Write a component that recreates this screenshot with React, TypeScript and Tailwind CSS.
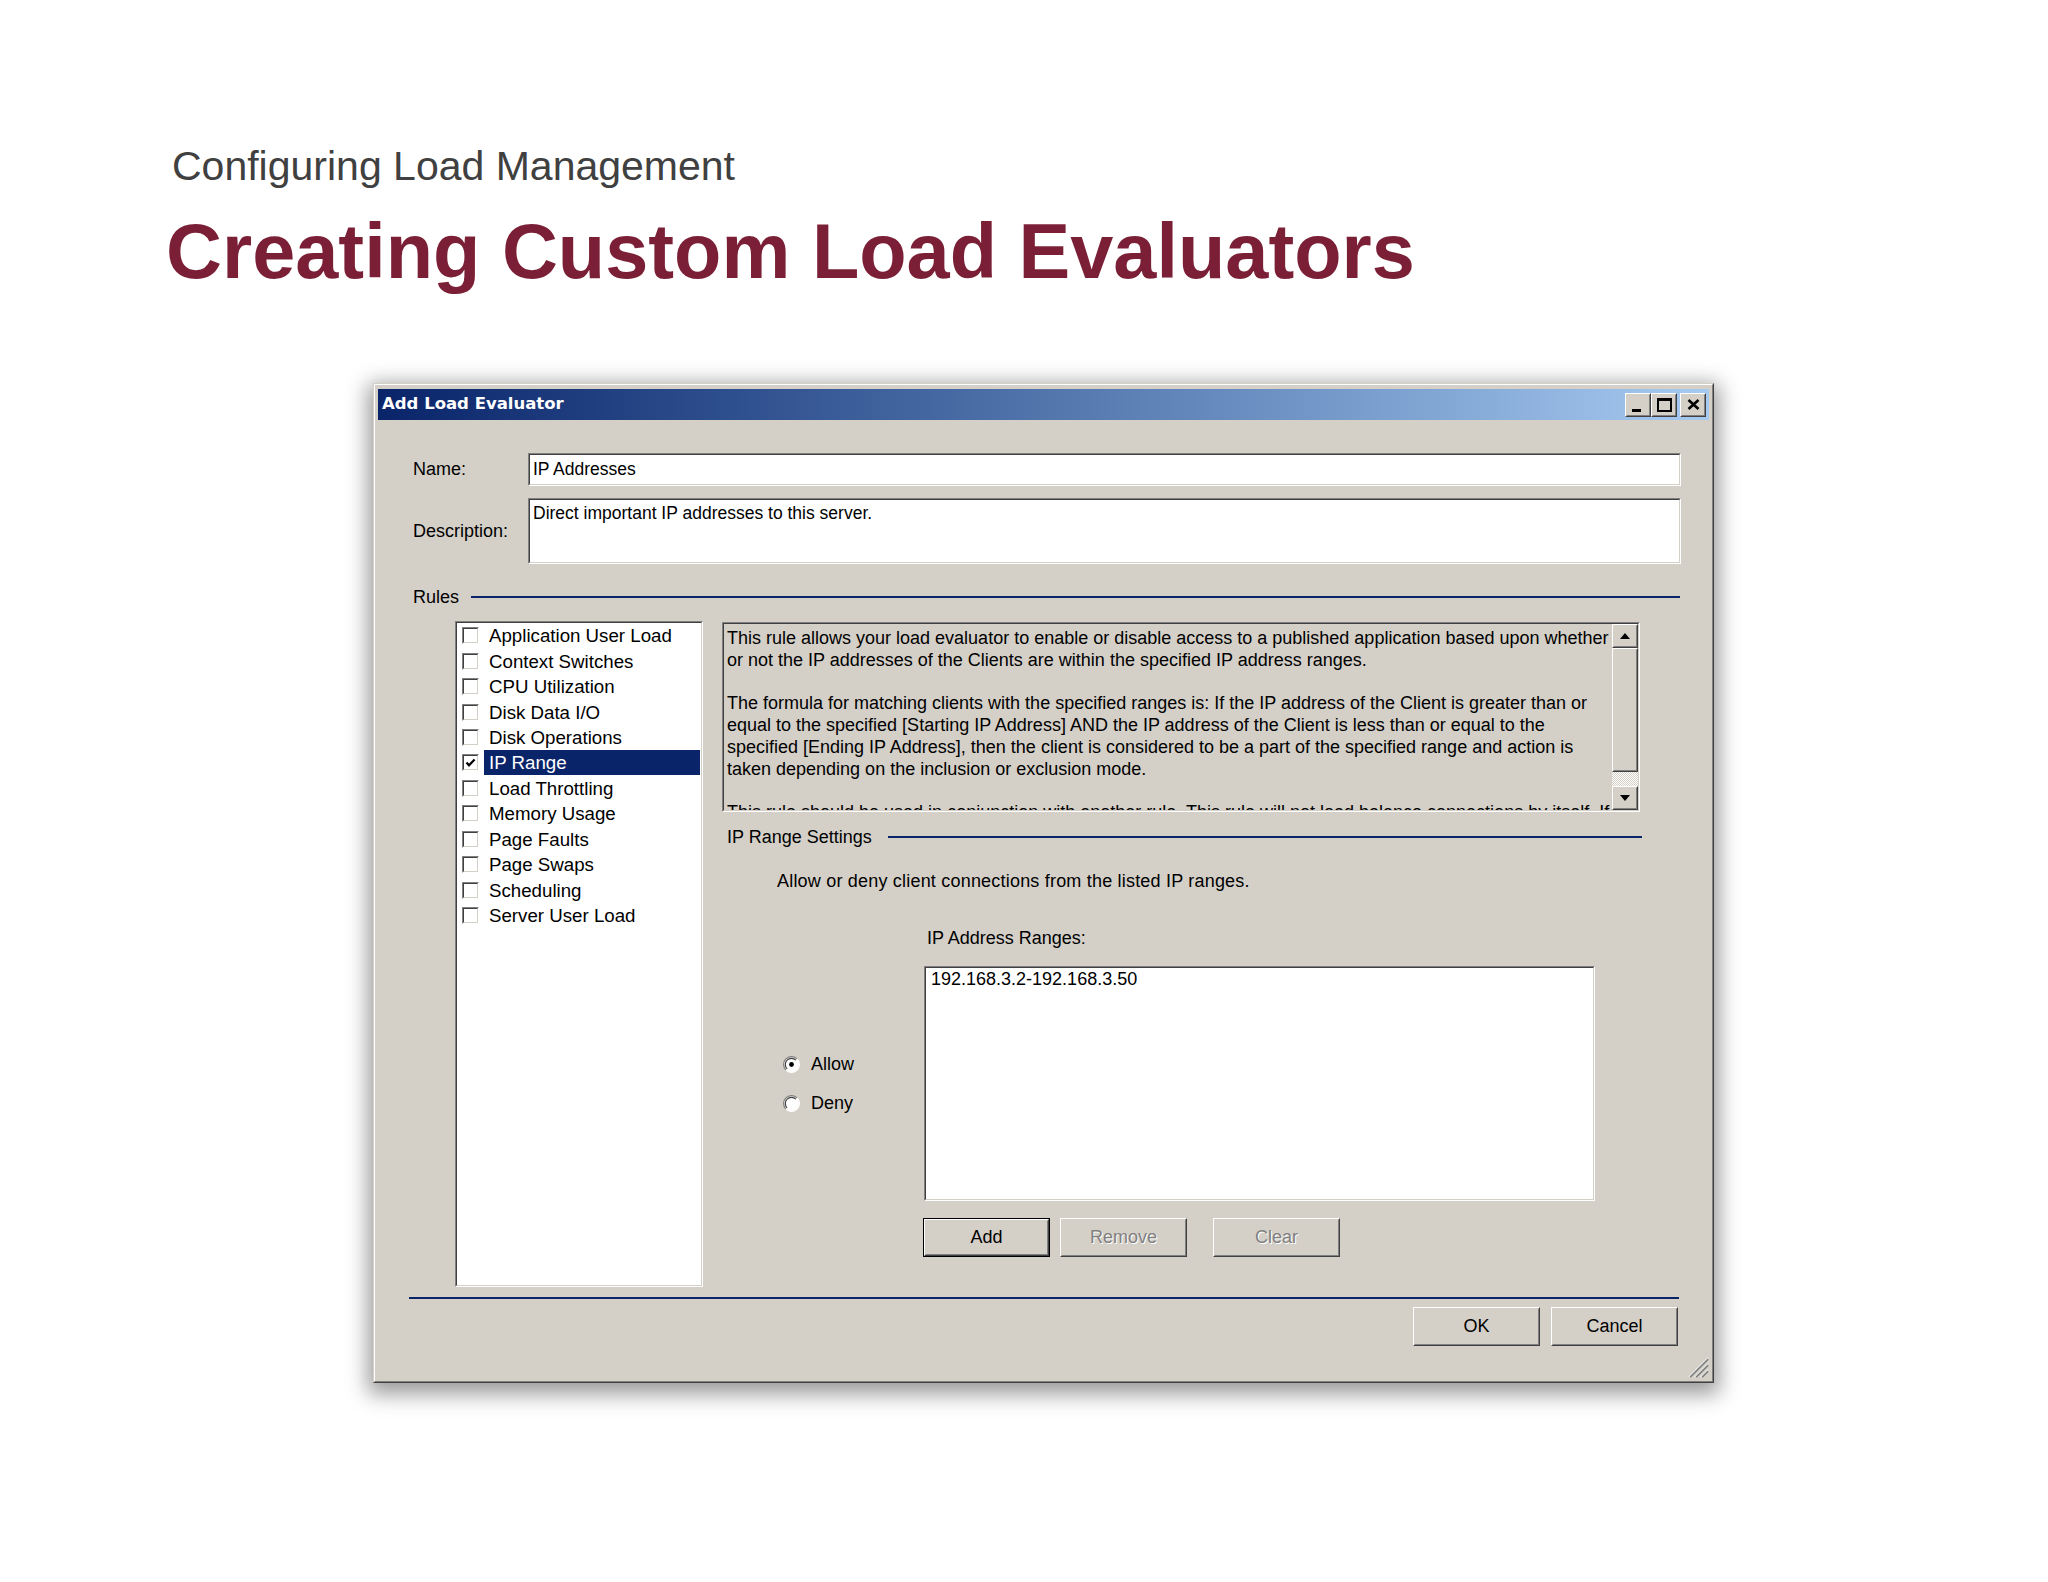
import React from "react";

const rules = [
  "Application User Load",
  "Context Switches",
  "CPU Utilization",
  "Disk Data I/O",
  "Disk Operations",
  "IP Range",
  "Load Throttling",
  "Memory Usage",
  "Page Faults",
  "Page Swaps",
  "Scheduling",
  "Server User Load",
];

const helpLines = [
  "This rule allows your load evaluator to enable or disable access to a published application based upon whether",
  "or not the IP addresses of the Clients are within the specified IP address ranges.",
  "",
  "The formula for matching clients with the specified ranges is:  If the IP address of the Client is greater than or",
  "equal to the specified [Starting IP Address] AND the IP address of the Client is less than or equal to the",
  "specified [Ending IP Address], then the client is considered to be a part of the specified range and action is",
  "taken depending on the inclusion or exclusion mode.",
  "",
  "This rule should be used in conjunction with another rule. This rule will not load balance connections by itself. If",
];

function Raised({
  className = "",
  inner = "flex items-center justify-center",
  children,
}: {
  className?: string;
  inner?: string;
  children?: React.ReactNode;
}) {
  return (
    <div className={"border border-t-white border-l-white border-b-[#404040] border-r-[#404040] bg-[#d4d0c8] " + className}>
      <div className={"w-full h-full border border-t-[#d4d0c8] border-l-[#d4d0c8] border-b-[#808080] border-r-[#808080] " + inner}>
        {children}
      </div>
    </div>
  );
}

function Sunken({
  className = "",
  inner = "bg-white",
  children,
}: {
  className?: string;
  inner?: string;
  children?: React.ReactNode;
}) {
  return (
    <div className={"border border-t-[#808080] border-l-[#808080] border-b-white border-r-white " + className}>
      <div className={"w-full h-full border border-t-[#404040] border-l-[#404040] border-b-[#d4d0c8] border-r-[#d4d0c8] " + inner}>
        {children}
      </div>
    </div>
  );
}

function CheckBox({ checked }: { checked?: boolean }) {
  return (
    <Sunken className="w-[17px] h-[17px] shrink-0" inner="bg-white flex items-center justify-center">
      {checked && (
        <svg width="11" height="11" viewBox="0 0 11 11">
          <path d="M1.5 5.5 L4 8.3 L9.6 2.4" stroke="#000" strokeWidth="2.2" fill="none" />
        </svg>
      )}
    </Sunken>
  );
}

function Radio({ checked }: { checked?: boolean }) {
  return (
    <svg width="17" height="17" viewBox="0 0 17 17" className="shrink-0">
      <circle cx="8.5" cy="8.5" r="7.5" fill="#fff" />
      <path d="M14.1 2.9 A7.5 7.5 0 0 0 2.9 14.1" stroke="#808080" strokeWidth="1.2" fill="none" />
      <path d="M12.9 4.1 A6.2 6.2 0 0 0 4.1 12.9" stroke="#404040" strokeWidth="1.2" fill="none" />
      <path d="M2.9 14.1 A7.5 7.5 0 0 0 14.1 2.9" stroke="#ffffff" strokeWidth="1.2" fill="none" />
      {checked && <circle cx="8.5" cy="8.5" r="2.4" fill="#000" />}
    </svg>
  );
}

function Button({
  label,
  disabled,
  isDefault,
  className = "",
}: {
  label: string;
  disabled?: boolean;
  isDefault?: boolean;
  className?: string;
}) {
  const text = disabled ? "text-[#808080] [text-shadow:1px_1px_0_#ffffff]" : "text-black";
  if (isDefault) {
    return (
      <div className={"w-[127px] h-[39px] border border-black " + className}>
        <Raised className="w-full h-full">
          <span className={text}>{label}</span>
        </Raised>
      </div>
    );
  }
  return (
    <Raised className={"w-[127px] h-[39px] " + className}>
      <span className={text}>{label}</span>
    </Raised>
  );
}

function ScrollBar() {
  return (
    <div className="w-[26px] flex flex-col shrink-0">
      <Raised className="h-[24px]">
        <svg width="10" height="6" viewBox="0 0 10 6">
          <polygon points="5,0 10,6 0,6" fill="#000" />
        </svg>
      </Raised>
      <Raised className="h-[124px]" />
      <div className="h-[14px] bg-[repeating-conic-gradient(#ffffff_0_25%,#d4d0c8_0_50%)] bg-[length:2px_2px]" />
      <Raised className="h-[24px]">
        <svg width="10" height="6" viewBox="0 0 10 6">
          <polygon points="0,0 10,0 5,6" fill="#000" />
        </svg>
      </Raised>
    </div>
  );
}

export default function App() {
  return (
    <div className="w-full min-h-[1582px] bg-white font-['Liberation_Sans',Arial,sans-serif]">
      <div className="pl-[166px] pt-[142px]">
        <div className="ml-[6px] text-[41px] leading-[48px] text-[#404040]">Configuring Load Management</div>
        <div className="mt-[22px] text-[77.5px] leading-[79px] font-bold text-[#7b1f36]">
          Creating Custom Load Evaluators
        </div>
      </div>

      {/* dialog window */}
      <div className="relative ml-[373px] mt-[92px] w-[1341px] h-[1000px] bg-[#d4d0c8] border border-t-[#d4d0c8] border-l-[#d4d0c8] border-b-[#404040] border-r-[#404040] shadow-[0_6px_20px_5px_rgba(0,0,0,0.4)]">
        <div className="h-full flex flex-col border border-t-white border-l-white border-b-[#808080] border-r-[#808080] px-[3px] pt-[4px]">
          <div className="h-[31px] shrink-0 flex items-center justify-between bg-linear-to-r from-[#0a246a] to-[#a6caf0] pl-[4px] pr-[3px]">
            <span className="font-['DejaVu_Sans',Verdana,sans-serif] font-bold text-[16.5px] text-white">
              Add Load Evaluator
            </span>
            <div className="flex items-center">
              <Raised className="w-[26px] h-[24px]" inner="flex items-end pl-[5px] pb-[3px]">
                <div className="w-[9px] h-[3px] bg-black" />
              </Raised>
              <Raised className="w-[26px] h-[24px]">
                <div className="w-[15px] h-[14px] border-2 border-t-[3px] border-black" />
              </Raised>
              <Raised className="ml-[3px] w-[26px] h-[24px]">
                <svg width="13" height="11" viewBox="0 0 13 11">
                  <path d="M1.5 1 L11.5 10 M11.5 1 L1.5 10" stroke="#000" strokeWidth="2.6" />
                </svg>
              </Raised>
            </div>
          </div>

          <div className="flex-1 flex flex-col pl-[35px] pr-[28px] pt-[33px] text-[18px] text-black">
            <div className="grid grid-cols-[115px_1fr] gap-y-[12px] items-center">
              <div>Name:</div>
              <Sunken className="h-[33px]">
                <div className="pl-[3px] leading-[29px] text-[17.5px]">IP Addresses</div>
              </Sunken>
              <div>Description:</div>
              <Sunken className="h-[66px]">
                <div className="pl-[3px] pt-[2px] leading-[22px] text-[17.5px]">
                  Direct important IP addresses to this server.
                </div>
              </Sunken>
            </div>

            <div className="mt-[22px] h-[22px] flex items-center">
              <span>Rules</span>
              <div className="ml-[12px] mr-[1px] flex-1 h-[2px] bg-[#0a246a]" />
            </div>

            <div className="mt-[13px] flex pl-[42px] gap-[19px]">
              <Sunken className="w-[248px] h-[666px] shrink-0">
                <div className="text-[18.7px]">
                  {rules.map((r) => {
                    const sel = r === "IP Range";
                    return (
                      <div key={r} className="h-[25.45px] flex items-center pl-[5px]">
                        <CheckBox checked={sel} />
                        <div
                          className={
                            "ml-[5px] mr-[1px] flex-1 h-[25px] leading-[25px] pl-[5px] whitespace-nowrap " +
                            (sel ? "bg-[#0a246a] text-white" : "")
                          }
                        >
                          {r}
                        </div>
                      </div>
                    );
                  })}
                </div>
              </Sunken>

              <div className="w-[920px] flex flex-col">
                <Sunken className="mt-[1px] w-[918px] h-[190px]" inner="bg-[#d4d0c8] flex">
                  <div className="flex-1 overflow-hidden pl-[3px] pt-[4px] leading-[21.8px] whitespace-nowrap">
                    {helpLines.map((l, i) => (
                      <div key={i} className="h-[21.8px]">
                        {l}
                      </div>
                    ))}
                  </div>
                  <ScrollBar />
                </Sunken>

                <div className="mt-[14px] h-[22px] flex items-center pl-[5px]">
                  <span>IP Range Settings</span>
                  <div className="ml-[16px] flex-1 h-[2px] bg-[#0a246a]" />
                </div>

                <div className="mt-[22px] pl-[55px] leading-[22px] tracking-[0.2px]">
                  Allow or deny client connections from the listed IP ranges.
                </div>

                <div className="mt-[35px] grid grid-cols-[202px_671px] gap-y-[17px]">
                  <div />
                  <div className="pl-[3px] leading-[22px]">IP Address Ranges:</div>

                  <div className="self-center flex flex-col gap-[17px] pl-[61px]">
                    <div className="flex items-center h-[22px] gap-[11px]">
                      <Radio checked />
                      <span>Allow</span>
                    </div>
                    <div className="flex items-center h-[22px] gap-[11px]">
                      <Radio />
                      <span>Deny</span>
                    </div>
                  </div>
                  <Sunken className="h-[235px]">
                    <div className="pl-[5px] leading-[22px]">192.168.3.2-192.168.3.50</div>
                  </Sunken>

                  <div />
                  <div className="flex">
                    <Button label="Add" isDefault className="ml-[-1px]" />
                    <Button label="Remove" disabled className="ml-[10px]" />
                    <Button label="Clear" disabled className="ml-[26px]" />
                  </div>
                </div>
              </div>
            </div>

            <div className="mt-[10px] h-[2px] bg-[#0a246a] ml-[-4px] mr-[2px]" />

            <div className="mt-[8px] flex justify-end gap-[11px] mr-[3px]">
              <Button label="OK" />
              <Button label="Cancel" />
            </div>
          </div>
        </div>

        {/* resize grip */}
        <svg width="22" height="22" viewBox="0 0 22 22" className="absolute right-[4px] bottom-[4px]">
          <path d="M21 3 L3 21 M21 9 L9 21 M21 15 L15 21" stroke="#808080" strokeWidth="2" />
          <path d="M21 1.5 L1.5 21 M21 7.5 L7.5 21 M21 13.5 L13.5 21" stroke="#ffffff" strokeWidth="1" />
        </svg>
      </div>
    </div>
  );
}
